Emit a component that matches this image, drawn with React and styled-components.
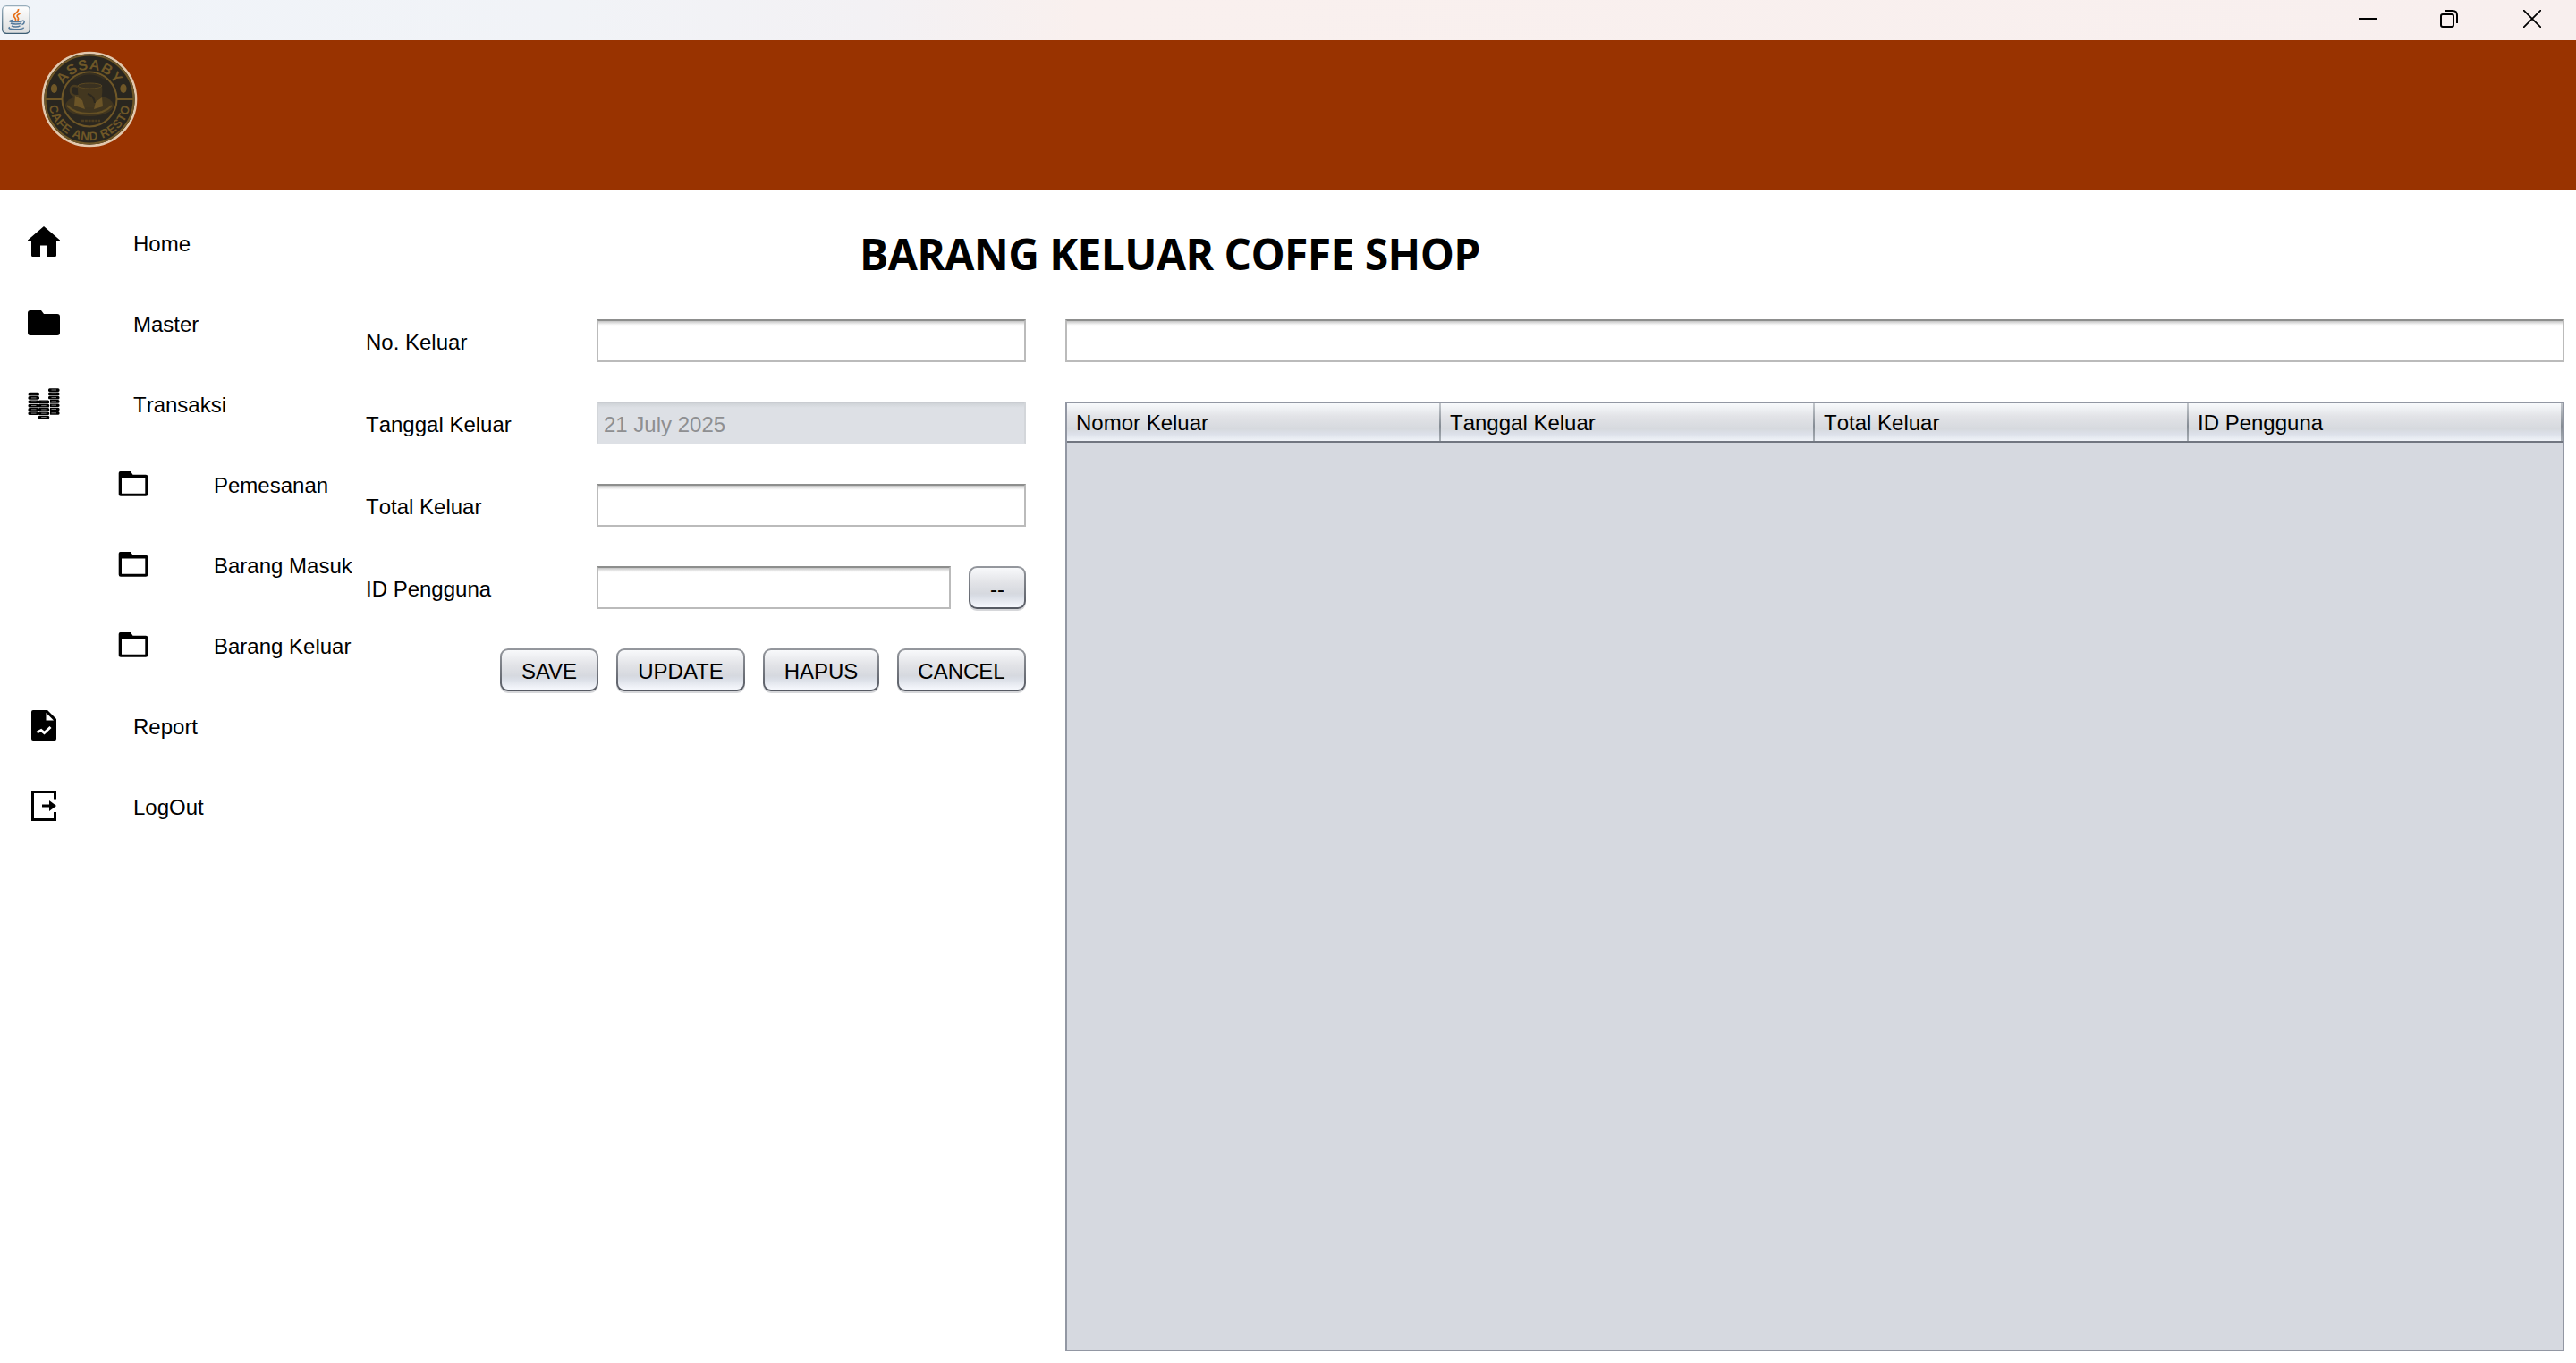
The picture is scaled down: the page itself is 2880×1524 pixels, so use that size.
import React from "react";
import styled, { createGlobalStyle } from "styled-components";

const GlobalStyle = createGlobalStyle`
  * { box-sizing: border-box; }
  body { margin: 0; background: #fff; }
`;

const Window = styled.div`
  width: 2880px;
  height: 1524px;
  display: flex;
  flex-direction: column;
  background: #fff;
  color: #000;
  font: 24px/28px "Liberation Sans", Arial, sans-serif;
  font-kerning: none;
  overflow: hidden;
`;

const TitleBar = styled.header`
  height: 45px;
  flex: none;
  display: flex;
  align-items: flex-start;
  justify-content: space-between;
  background: linear-gradient(90deg, #f0f4f9 0%, #f1f3f7 22%, #f3f1f4 34%, #f9f0ee 42%, #f8efee 100%);
`;

const JavaIcon = styled.svg`
  margin: 6px 0 0 2px;
`;

const WindowControls = styled.div`
  width: 204px;
  display: grid;
  grid-template-columns: 91px 93px 20px;
  margin: 11px 39px 0 0;
`;

const Banner = styled.div`
  height: 168px;
  flex: none;
  padding: 12px 46px;
  background: #993300;
`;

const Logo = styled.svg`
  display: block;
  font-family: "Liberation Sans", Arial, sans-serif;
  font-weight: bold;
`;

const Body = styled.main`
  flex: 1;
  display: flex;
`;

const Nav = styled.nav`
  width: 408px;
  flex: none;
  padding-top: 13px;
`;

const NavItem = styled.a`
  height: 90px;
  display: flex;
  align-items: center;
  padding-left: ${(p) => (p.$nested ? 129 : 29)}px;
  gap: ${(p) => (p.$nested ? 70 : 80)}px;
  white-space: nowrap;
`;

const NavIcon = styled.svg`
  width: 40px;
  height: 40px;
  flex: none;
`;

const NavLabel = styled.span`
  padding-top: 3px;
`;

const Content = styled.section`
  flex: 1;
  padding: 38px 13px 13px 0;
  display: flex;
  flex-direction: column;
`;

const Title = styled.h1`
  margin: 0 0 40px 553px;
  font: bold 48px/66px "Open Sans", "Noto Sans", sans-serif;
  font-kerning: normal;
  letter-spacing: -0.6px;
  white-space: nowrap;
`;

const Columns = styled.div`
  flex: 1;
  display: flex;
  gap: 44px;
`;

const Form = styled.form`
  width: 739px;
  flex: none;
  display: flex;
  flex-direction: column;
  gap: 44px;
`;

const Row = styled.div`
  display: flex;
  height: 48px;
  gap: 20px;
`;

const Label = styled.label`
  width: 239px;
  flex: none;
  padding: 12px 0 0 1px;
`;

const Field = styled.input`
  display: block;
  min-width: 0;
  width: 100%;
  height: 48px;
  flex: ${(p) => (p.$block ? "0 0 48px" : "1 1 0")};
  margin: 0;
  padding: 4px 8px 0 6px;
  border: 2px solid #bbbbbb;
  border-top-color: #8d8e8d;
  border-radius: 0;
  outline: none;
  font: inherit;
  background: linear-gradient(#c3c3c3 0, #dedede 2px, #f8f8f8 4px, #fff 5px);

  &:disabled {
    color: #8e8f91;
    border-color: #c9ccd1 #d3d6da #dde0e5;
    background: linear-gradient(#d0d4d8, #dde0e5 5px);
  }
`;

const FieldGroup = styled.div`
  flex: 1;
  display: flex;
  gap: 20px;
`;

const Actions = styled(Row)`
  padding-left: 151px;
`;

const Button = styled.button`
  width: ${(p) => p.$width}px;
  height: 48px;
  flex: none;
  padding: 4px 0 0;
  border: 2px solid transparent;
  border-radius: 9px;
  color: #000;
  font: inherit;
  font-kerning: ${(p) => (p.$kerned ? "normal" : "none")};
  background:
    linear-gradient(#f8f9fb 0%, #e2e3e7 38%, #d6d9df 65%, #d9dde5 72%, #f6f8fd 100%) padding-box,
    linear-gradient(#95989e, #555962) border-box;
  box-shadow: 0 2px 0 #d6d7da;
`;

const Listing = styled.div`
  flex: 1;
  display: flex;
  flex-direction: column;
  gap: 44px;
`;

const Table = styled.div`
  flex: 1;
  border: 2px solid #9297a3;
  background: #d6d9e0;
`;

const TableHead = styled.div`
  height: 44px;
  display: grid;
  grid-template-columns: repeat(4, 1fr);
  border-bottom: 2px solid #717680;
  background: linear-gradient(#f8fafc 0%, #e2e3e7 35%, #d6d9de 68%, #dde1ea 82%, #f0f3f8 100%);
`;

const HeadCell = styled.div`
  padding: 8px 0 0 10px;
  border-style: solid;
  border-width: 0 2px 0 0;
  border-image: linear-gradient(#c4c8cd, #858c94 60%, #a9afb6) 1;
`;

const HomeGlyph = () => (
  <path d="M20 2 2 17.5V19h4v15.500q0 1.500 1.500 1.500H16V23.500h8V36h8.500q1.500 0 1.500-1.500V19h4v-1.500Z" />
);
const FolderGlyph = () => (
  <path d="M5 6h12l3 4h15q3 0 3 3v18q0 3-3 3H5q-3 0-3-3V9q0-3 3-3Z" />
);
const OpenFolderGlyph = () => (
  <path
    fillRule="evenodd"
    d="M5.500 6h11.500l2.500 3.700h14.500q2.300 0 2.300 2.300v19.500q0 2.300-2.300 2.300H6q-2.300 0-2.300-2.300V8Q3.700 6 5.500 6ZM7 13.500V30.700H33.300V13.500Z"
  />
);
const ReportGlyph = () => (
  <>
    <path d="M9 3h15l10 10v22q0 2-2 2H8q-2 0-2-2V5q0-2 2-2Z" />
    <path d="M22.500 6v8.500H31Z" fill="#fff" />
    <path d="m12.500 28 4.500-2.500 3.500 3 7-6.500" fill="none" stroke="#fff" strokeWidth="3" />
  </>
);
const LogOutGlyph = () => (
  <>
    <path d="M32.500 12.500V4.500H7.500v31h25v-8.500" fill="none" stroke="#000" strokeWidth="3" />
    <path d="M18 18.500h8V14l8 6-8 6v-4.500h-8Z" />
  </>
);
const CoinStack = ({ x, y, count }) =>
  Array.from({ length: count }, (_, i) => (
    <g key={i}>
      <rect x={x} y={y + i * 4.3} width="12.500" height="3.700" rx="1.500" />
      <path d={`M${x + 3.5} ${y + i * 4.3 + 1.8}h5.500`} stroke="#777" strokeWidth="1" />
    </g>
  ));
const CoinsGlyph = () => (
  <>
    <CoinStack x={2.5} y={7.8} count={6} />
    <CoinStack x={25} y={3.2} count={7} />
    <rect x="13" y="15.500" width="14" height="23" fill="#fff" />
    <CoinStack x={13.7} y={16.5} count={5} />
  </>
);

const navItems = [
  { label: "Home", Glyph: HomeGlyph },
  { label: "Master", Glyph: FolderGlyph },
  { label: "Transaksi", Glyph: CoinsGlyph },
  { label: "Pemesanan", Glyph: OpenFolderGlyph, nested: true },
  { label: "Barang Masuk", Glyph: OpenFolderGlyph, nested: true },
  { label: "Barang Keluar", Glyph: OpenFolderGlyph, nested: true },
  { label: "Report", Glyph: ReportGlyph },
  { label: "LogOut", Glyph: LogOutGlyph },
];

const actions = [
  { name: "SAVE", width: 110, kerned: true },
  { name: "UPDATE", width: 144, kerned: true },
  { name: "HAPUS", width: 130 },
  { name: "CANCEL", width: 144 },
];

const columns = ["Nomor Keluar", "Tanggal Keluar", "Total Keluar", "ID Pengguna"];

function BrandLogo() {
  return (
    <Logo width="108" height="108" viewBox="0 0 108 108">
      <defs>
        <path id="upperArc" d="M20.500 54a33.500 33.500 0 0 1 67 0" />
        <path id="lowerArc" d="M8 54a46 46 0 0 0 92 0" />
      </defs>
      <circle cx="54" cy="54" r="52" fill="#29261f" stroke="#e2c8ad" strokeWidth="2.600" />
      <circle cx="54" cy="54" r="49.500" fill="none" stroke="#6f5727" strokeWidth="2.200" />
      <circle cx="54" cy="54" r="30.500" fill="#2b271f" stroke="#6f5727" strokeWidth="2" />
      <path d="M5 54h18M85 54h18" stroke="#6f5727" strokeWidth="2.200" />
      <g fill="#6f5727">
        <ellipse cx="14.500" cy="42" rx="3.600" ry="5" />
        <ellipse cx="92" cy="42" rx="3.600" ry="5" />
      </g>
      <text fill="#6f5727" fontSize="16" letterSpacing="0.8" textAnchor="middle">
        <textPath href="#upperArc" startOffset="50%">ASSABY</textPath>
      </text>
      <text fill="#6f5727" fontSize="13.500" letterSpacing="0.6" textAnchor="middle">
        <textPath href="#lowerArc" startOffset="50%">CAFE AND RESTO</textPath>
      </text>
      <ellipse cx="54" cy="61" rx="27" ry="12" fill="#40351f" />
      <path d="M29 61q8 9 25 9t25-9" fill="none" stroke="#655024" strokeWidth="2" />
      <path d="M41 38h27q2 20-8 25H49q-9-7-8-25Z" fill="#43371f" />
      <path d="M41 40q-8-3-8 4t9 6" fill="none" stroke="#4a3c20" strokeWidth="2.500" />
      <ellipse cx="54.500" cy="39" rx="13.500" ry="3" fill="#3a3120" stroke="#5a4822" />
      <path d="m38 50 8 5 3 10-12-4ZM68 52l-7 5-2 8 10-3Z" fill="#6b5427" />
      <path d="M52 48q7 2 8 10" fill="none" stroke="#2d281e" strokeWidth="2" />
      <path d="M37 31q17-11 34 0" fill="none" stroke="#383020" strokeWidth="2" />
      <path d="M45 78h21" stroke="#4c3d20" strokeWidth="2.500" strokeDasharray="3 .8" />
    </Logo>
  );
}

export default function App() {
  return (
    <Window>
      <GlobalStyle />
      <TitleBar>
        <JavaIcon width="32" height="32" viewBox="0 0 32 32">
          <defs>
            <linearGradient id="tile" x2="0" y2="1">
              <stop stopColor="#fff" />
              <stop offset="1" stopColor="#dcdddd" />
            </linearGradient>
            <linearGradient id="tileEdge" x2="0" y2="1">
              <stop stopColor="#97adbb" />
              <stop offset="1" stopColor="#3c5d73" />
            </linearGradient>
          </defs>
          <rect x=".7" y=".7" width="30.600" height="30.600" rx="4.500" fill="url(#tile)" stroke="url(#tileEdge)" strokeWidth="1.300" />
          <g fill="none" stroke="#e76f17" strokeWidth="1.700">
            <path d="M18.500 4c1 4-6 5-5 8 .5 2 2.500 2 2 5" />
            <path d="M20.500 9c-4 2-4 3-2.500 4.500 1 1 .5 2.500-.5 3.200" />
          </g>
          <g fill="none" stroke="#53799b" strokeWidth="1.500">
            <path d="M12 16.500c-6 1.500-3 2 3.500 1.900 4 0 7-.6 7.500-1.200M10 20c2 1.300 9 1.200 12 0M11 22.800c2 1.500 7 1.400 9.500 0M23 17.300c3-1 3 3-.5 4.300M9 24.500c-6 2.500 15 3.500 15.500.2" />
          </g>
        </JavaIcon>
        <WindowControls>
          <svg width="20" height="20" viewBox="0 0 20 20">
            <path d="M0 10h20" stroke="#000" strokeWidth="2" />
          </svg>
          <svg width="20" height="20" viewBox="0 0 20 20" fill="none" stroke="#000" strokeWidth="2">
            <rect x="1" y="5" width="14" height="14" rx="2" />
            <path d="M5 1h9q5 0 5 5v9" />
          </svg>
          <svg width="20" height="20" viewBox="0 0 20 20">
            <path d="m0 0 20 20M20 0 0 20" stroke="#000" strokeWidth="1.800" />
          </svg>
        </WindowControls>
      </TitleBar>
      <Banner>
        <BrandLogo />
      </Banner>
      <Body>
        <Nav>
          {navItems.map(({ label, Glyph, nested }) => (
            <NavItem key={label} $nested={nested}>
              <NavIcon viewBox="0 0 40 40">
                <Glyph />
              </NavIcon>
              <NavLabel>{label}</NavLabel>
            </NavItem>
          ))}
        </Nav>
        <Content>
          <Title>BARANG KELUAR COFFE SHOP</Title>
          <Columns>
            <Form>
              <Row>
                <Label>No. Keluar</Label>
                <Field />
              </Row>
              <Row>
                <Label>Tanggal Keluar</Label>
                <Field disabled defaultValue="21 July 2025" />
              </Row>
              <Row>
                <Label>Total Keluar</Label>
                <Field />
              </Row>
              <Row>
                <Label>ID Pengguna</Label>
                <FieldGroup>
                  <Field />
                  <Button type="button" $width={64}>--</Button>
                </FieldGroup>
              </Row>
              <Actions>
                {actions.map(({ name, width, kerned }) => (
                  <Button key={name} type="button" $width={width} $kerned={kerned}>{name}</Button>
                ))}
              </Actions>
            </Form>
            <Listing>
              <Field $block />
              <Table>
                <TableHead>
                  {columns.map((name) => (
                    <HeadCell key={name}>{name}</HeadCell>
                  ))}
                </TableHead>
              </Table>
            </Listing>
          </Columns>
        </Content>
      </Body>
    </Window>
  );
}
